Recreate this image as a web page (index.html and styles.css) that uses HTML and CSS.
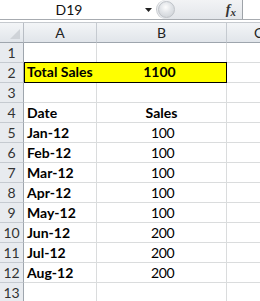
FILE: index.html
```html
<!DOCTYPE html>
<html>
<head>
<meta charset="utf-8">
<link rel="stylesheet" href="styles.css">
</head>
<body>
<div class="app">
  <div class="fbar">
    <div class="namebox">D19</div>
    <div class="dd"><svg width="7" height="4" viewBox="0 0 7 4"><path d="M0 0H7L3.5 4Z" fill="#222"/></svg></div>
    <div class="fxbox">
      <div class="knob"></div>
      <span class="fx">f<span class="x">x</span></span>
    </div>
    <div class="input"></div>
  </div>
  <div class="sep"></div>
  <div class="sheet">
    <div class="corner"><svg width="10" height="10" viewBox="0 0 10 10"><path d="M10 0V10H0Z" fill="#cfd3d8"/></svg></div>
    <div class="ch">A</div><div class="ch">B</div><div class="ch last">C</div>

    <div class="rh">1</div><div class="c"></div><div class="c"></div><div class="c last"></div>
    <div class="rh">2</div><div class="total"><span class="b">Total Sales</span><span class="b val">1100</span></div><div class="c last"></div>
    <div class="rh">3</div><div class="c"></div><div class="c"></div><div class="c last"></div>
    <div class="rh">4</div><div class="c b">Date</div><div class="c b ctr">Sales</div><div class="c last"></div>
    <div class="rh">5</div><div class="c b">Jan-12</div><div class="c num">100</div><div class="c last"></div>
    <div class="rh">6</div><div class="c b">Feb-12</div><div class="c num">100</div><div class="c last"></div>
    <div class="rh">7</div><div class="c b">Mar-12</div><div class="c num">100</div><div class="c last"></div>
    <div class="rh">8</div><div class="c b">Apr-12</div><div class="c num">100</div><div class="c last"></div>
    <div class="rh">9</div><div class="c b">May-12</div><div class="c num">100</div><div class="c last"></div>
    <div class="rh">10</div><div class="c b">Jun-12</div><div class="c num">200</div><div class="c last"></div>
    <div class="rh">11</div><div class="c b">Jul-12</div><div class="c num">200</div><div class="c last"></div>
    <div class="rh">12</div><div class="c b">Aug-12</div><div class="c num">200</div><div class="c last"></div>
    <div class="rh">13</div><div class="c"></div><div class="c"></div><div class="c last"></div>
  </div>
</div>
</body>
</html>
```

FILE: styles.css
```css
* { box-sizing: border-box; }
html, body { margin: 0; padding: 0; background: #fff; }
body { width: 260px; height: 301px; overflow: hidden; font-family: Lato, "Open Sans", sans-serif; font-size: 14px; color: #000; }
.app { display: flex; flex-direction: column; }

.fbar { display: flex; height: 20px; border-bottom: 1px solid #a7abb0; }
.namebox { width: 140px; text-align: center; line-height: 19px; font-size: 14px; color: #111; padding-right: 2px; }
.dd { width: 16px; display: flex; align-items: center; justify-content: center; padding-top: 1px; }
.fxbox { position: relative; width: 87px; background: linear-gradient(#f2f3f5, #e3e6ea); border-left: 1px solid #c9ccd0; border-right: 1px solid #9ea3a8; border-radius: 10px 0 0 10px; display: flex; justify-content: flex-end; align-items: center; padding-right: 6px; }
.knob { position: absolute; left: 1px; top: 1px; width: 17px; height: 17px; border-radius: 50%; background: radial-gradient(circle at 45% 35%, #fdfdfd 0, #e1e4e8 45%, #c9cdd2 100%); border: 1px solid #bfc3c8; }
.fx { font-family: "Liberation Serif", serif; font-style: italic; font-weight: bold; font-size: 14px; color: #333; }
.fx .x { font-size: 11px; position: relative; top: 2px; }
.input { flex: 1; }

.sep { height: 3px; border-bottom: 1px solid #c5c9ce; }

.sheet { display: grid; grid-template-columns: 24px 73px 130px 1fr; grid-template-rows: 20px; grid-auto-rows: 20px; }
.corner { background: linear-gradient(#f3f5f7, #e1e5ea); border-right: 1px solid #b8bdc4; border-bottom: 1px solid #9ea5ad; display: flex; align-items: flex-end; justify-content: flex-end; padding: 0 3px 3px 0; }
.ch { background: linear-gradient(#f3f5f7, #e1e5ea); border-right: 1px solid #c5cad0; border-bottom: 1px solid #9ea5ad; text-align: center; line-height: 19px; color: #222; }
.ch.last { border-right: none; text-align: left; padding-left: 27px; }
.rh { background: #e8ebef; border-right: 1px solid #9ea5ad; border-bottom: 1px solid #c5cad0; text-align: center; line-height: 19px; color: #333; }
.c { border-right: 1px solid #dadcdd; border-bottom: 1px solid #dadcdd; line-height: 19px; padding-left: 3px; white-space: nowrap; overflow: hidden; }
.c.last { border-right: none; }
.b { font-weight: bold; }
.ctr { text-align: center; padding-left: 0; }
.num { padding-left: 54px; letter-spacing: -0.4px; }
.total { grid-column: span 2; background: #ffff00; border: 1px solid #000; margin-top: -1px; height: 21px; display: flex; line-height: 18px; padding-left: 2px; }
.total .val { margin-left: auto; width: 130px; text-align: center; padding-right: 3px; }
```
